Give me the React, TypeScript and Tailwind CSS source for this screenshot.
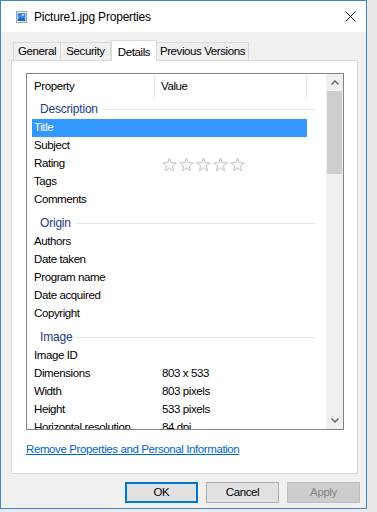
import React from "react";

type Row = { label: string; value?: React.ReactNode; selected?: boolean };
type Group = { title: string; rows: Row[] };

const GROUPS: Group[] = [
  {
    title: "Description",
    rows: [
      { label: "Title", selected: true },
      { label: "Subject" },
      { label: "Rating", value: "stars" },
      { label: "Tags" },
      { label: "Comments" },
    ],
  },
  {
    title: "Origin",
    rows: [
      { label: "Authors" },
      { label: "Date taken" },
      { label: "Program name" },
      { label: "Date acquired" },
      { label: "Copyright" },
    ],
  },
  {
    title: "Image",
    rows: [
      { label: "Image ID" },
      { label: "Dimensions", value: "803 x 533" },
      { label: "Width", value: "803 pixels" },
      { label: "Height", value: "533 pixels" },
      { label: "Horizontal resolution", value: "84 dpi" },
    ],
  },
];

const TABS = [
  { label: "General", w: "w-[48px]" },
  { label: "Security", w: "w-[50px]" },
  { label: "Details", w: "w-[46px]", active: true },
  { label: "Previous Versions", w: "w-[92px]" },
];

function Star() {
  return (
    <svg width="15" height="15" viewBox="0 0 15 15" className="shrink-0">
      <path
        d="M7.5 1 L9.3 5.6 L14.2 5.9 L10.4 9 L11.6 13.8 L7.5 11.1 L3.4 13.8 L4.6 9 L0.8 5.9 L5.7 5.6 Z"
        fill="#fafafa"
        stroke="#c3c3c3"
        strokeWidth="1"
        strokeLinejoin="round"
      />
    </svg>
  );
}

function PictureIcon() {
  return (
    <svg width="11" height="12" viewBox="0 0 11 12">
      <rect x="0.5" y="0.5" width="10" height="11" fill="#ffffff" stroke="#9aa7b5" />
      <rect x="1.5" y="2" width="8" height="8" fill="#3f8edc" />
      <path d="M1.5 10 L4 6 L6 8 L7.5 6.5 L9.5 10 Z" fill="#1d5fa8" />
      <circle cx="7" cy="4" r="0.9" fill="#cfe6ff" />
    </svg>
  );
}

export default function App() {
  return (
    <div
      className="relative h-[512px] w-[377px] overflow-hidden bg-[#e9e9e9] text-[11.5px] tracking-[-0.4px] text-black"
      style={{ fontFamily: '"Liberation Sans", Arial, sans-serif' }}
    >
      {/* window */}
      <div className="flex h-[509px] w-[367px] flex-col border border-[#3a86cf] bg-[#f0f0f0]">
        {/* title bar */}
        <div className="flex h-[31px] shrink-0 items-center bg-white pl-[15px] pr-[10px]">
          <PictureIcon />
          <span className="ml-[7px] text-[12px] tracking-[-0.2px]">Picture1.jpg Properties</span>
          <svg width="11" height="11" viewBox="0 0 11 11" className="ml-auto">
            <path d="M0.5 0.5 L10.5 10.5 M10.5 0.5 L0.5 10.5" stroke="#111" strokeWidth="1" />
          </svg>
        </div>

        {/* tabs */}
        <div className="ml-[12px] mt-[8px] flex h-[20px] items-end">
          {TABS.map((t) =>
            t.active ? (
              <div
                key={t.label}
                className={`relative z-10 -mb-px flex h-[21px] items-start justify-center whitespace-nowrap border border-b-0 border-[#d9d9d9] bg-white pt-[3px] ${t.w}`}
              >
                {t.label}
              </div>
            ) : (
              <div
                key={t.label}
                className={`flex h-[18px] items-center justify-center whitespace-nowrap border border-b-0 border-l-0 border-[#d9d9d9] bg-[#f0f0f0] first:border-l ${t.w}`}
              >
                {t.label}
              </div>
            )
          )}
        </div>

        {/* tab panel */}
        <div className="ml-[10px] flex h-[414px] w-[347px] flex-col border border-[#d9d9d9] bg-white px-[14px] pt-[12px]">
          {/* list view */}
          <div className="flex h-[357px] w-[318px] border border-[#828282] bg-white">
            <div className="flex-1 overflow-hidden">
              {/* header */}
              <div className="flex h-[25px] items-center">
                <div className="flex h-[24px] w-[128px] items-center border-r border-[#e5e5e5] pl-[7px]">
                  Property
                </div>
                <div className="flex h-[24px] w-[152px] items-center border-r border-[#e5e5e5] pl-[6px]">
                  Value
                </div>
              </div>

              <div className="ml-[5px]">
                {GROUPS.map((g, gi) => (
                  <div key={g.title} className={gi > 0 ? "mt-[4px]" : ""}>
                    <div className="flex h-[20px] w-[283px] items-center pl-[8px]">
                      <span className="text-[12px] tracking-[-0.2px] text-[#1e3a8a]">{g.title}</span>
                      <div className="ml-[5px] h-px flex-1 bg-[#dfe4ec]" />
                    </div>
                    {g.rows.map((r) => (
                      <div
                        key={r.label}
                        className={`flex h-[18px] w-[275px] items-center ${
                          r.selected ? "bg-[#3399ff] text-white" : ""
                        }`}
                      >
                        <div className="w-[123px] shrink-0 whitespace-nowrap pl-[2px]">
                          {r.label}
                        </div>
                        <div className="flex items-center gap-[2px] pl-[7px]">
                          {r.value === "stars" ? (
                            <>
                              <Star />
                              <Star />
                              <Star />
                              <Star />
                              <Star />
                            </>
                          ) : (
                            r.value
                          )}
                        </div>
                      </div>
                    ))}
                  </div>
                ))}
              </div>
            </div>

            {/* scrollbar */}
            <div className="flex w-[17px] shrink-0 flex-col bg-[#f0f0f0]">
              <div className="flex h-[17px] items-center justify-center">
                <svg width="8" height="5" viewBox="0 0 8 5">
                  <path d="M0.5 4.5 L4 1 L7.5 4.5" fill="none" stroke="#606060" strokeWidth="1.3" />
                </svg>
              </div>
              <div className="mx-[1px] h-[83px] bg-[#cdcdcd]" />
              <div className="flex-1" />
              <div className="flex h-[17px] items-center justify-center">
                <svg width="8" height="5" viewBox="0 0 8 5">
                  <path d="M0.5 0.5 L4 4 L7.5 0.5" fill="none" stroke="#606060" strokeWidth="1.3" />
                </svg>
              </div>
            </div>
          </div>

          <a href="#" className="mt-[11px] w-fit text-[#0066cc] underline">
            Remove Properties and Personal Information
          </a>
        </div>

        {/* buttons */}
        <div className="mt-[8px] flex justify-end gap-[8px] pr-[6px]">
          <button className="h-[21px] w-[73px] border-2 border-[#0078d7] bg-[#e1e1e1]">OK</button>
          <button className="h-[21px] w-[73px] border border-[#adadad] bg-[#e1e1e1]">Cancel</button>
          <button className="h-[21px] w-[73px] border border-[#bfbfbf] bg-[#cccccc] text-[#838383]">
            Apply
          </button>
        </div>
      </div>
    </div>
  );
}
